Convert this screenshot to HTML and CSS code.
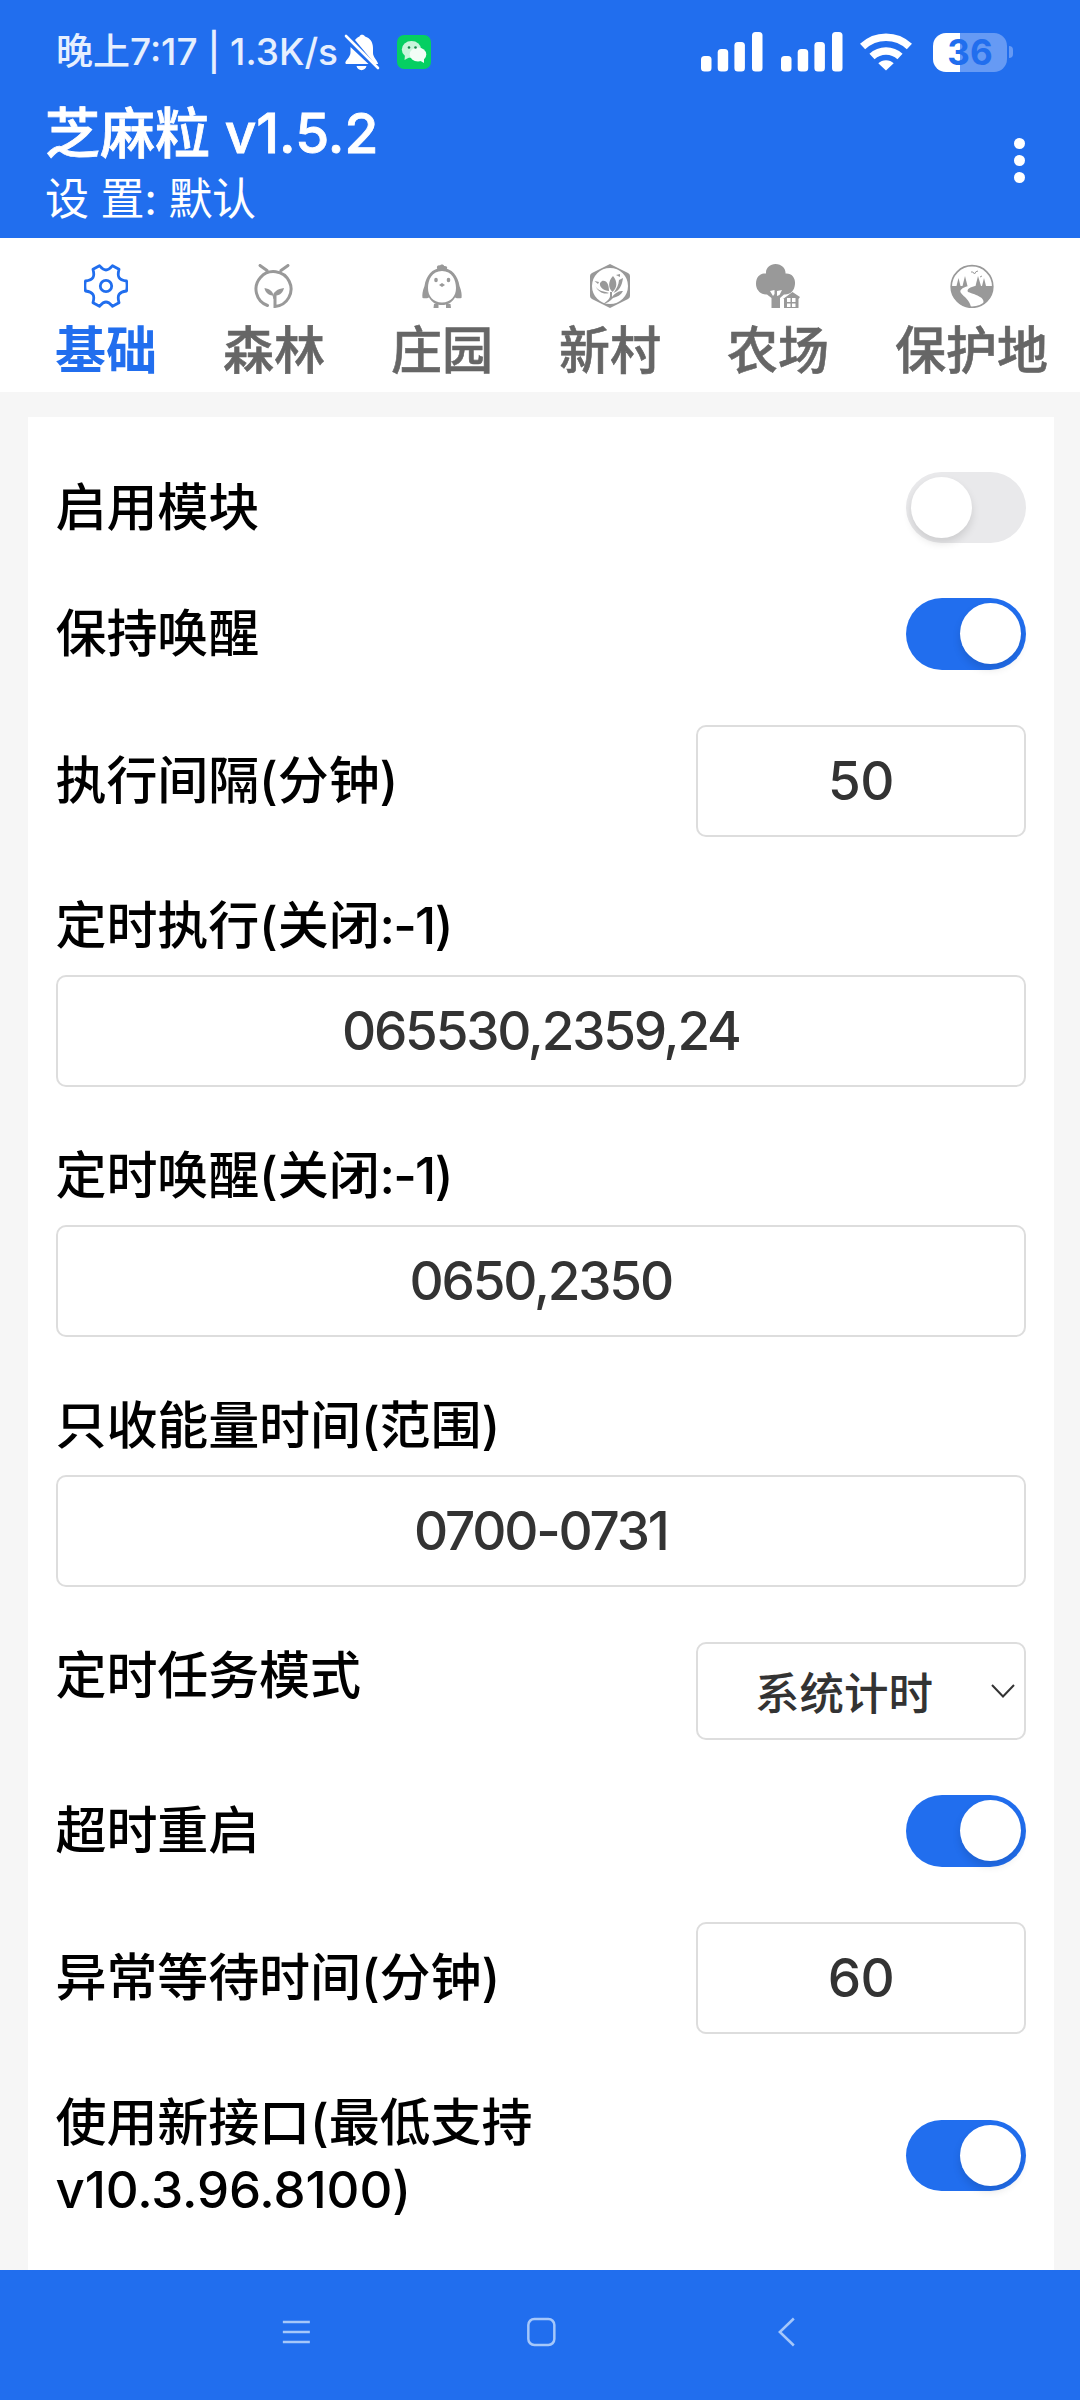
FILE: index.html
```html
<!DOCTYPE html>
<html lang="zh-CN">
<head>
    <meta charset="UTF-8">
    <meta name="viewport" content="width=device-width, initial-scale=1.0">
    <title>芝麻粒</title>
    <link rel="stylesheet" href="styles.css">
</head>
<body>
    <header class="header">
        <div class="status-bar">
            <div class="status-left">
                <span class="status-text">晚上7:17 | 1.3K/s</span>
                <svg class="bell" viewBox="0 0 36 38" width="36" height="38">
                    <path fill="#fff" d="M11 7C12.500 5 14 4 15.500 3.500C16 1 20 1 21 3.500C26 5 29 9 29 15V20C29 24 33 27 34 30.500V31H31ZM6.500 14L24.500 31H3C1 31 1 29.500 2 28C4 25 6.500 23 6.500 19ZM12.500 33H22.500C21.500 38.500 13.500 38.500 12.500 33Z"/>
                    <path stroke="#fff" stroke-width="2.600" stroke-linecap="round" d="M2 3L34 35"/>
                </svg>
                <svg class="wechat" viewBox="0 0 34 34" width="34" height="34">
                    <rect width="34" height="34" rx="7" fill="#05cf62"/>
                    <ellipse cx="14.500" cy="14.500" rx="9.700" ry="8.500" fill="#c9f5dc"/>
                    <path fill="#c9f5dc" d="M8 20L7.500 25L13 22Z"/>
                    <ellipse cx="21" cy="19.500" rx="8.300" ry="7" fill="#f2fdf6"/>
                    <path fill="#f2fdf6" d="M22 25L27 28L27 23Z"/>
                    <circle cx="12" cy="12.500" r="1.300" fill="#14894b"/>
                    <circle cx="18.500" cy="12.500" r="1.300" fill="#14894b"/>
                </svg>
            </div>
            <div class="status-right">
                <svg class="signal" viewBox="0 0 62 40" width="62" height="40" fill="#fff">
                    <rect x="0" y="24" width="10.500" height="15.500" rx="3.500"/>
                    <rect x="16.700" y="17" width="10.500" height="22.500" rx="3.500"/>
                    <rect x="33.400" y="10" width="10.500" height="29.500" rx="3.500"/>
                    <rect x="51" y="0" width="10.500" height="39.500" rx="3.500"/>
                </svg>
                <svg class="signal" viewBox="0 0 62 40" width="62" height="40" fill="#fff">
                    <rect x="0" y="24" width="10.500" height="15.500" rx="3.500"/>
                    <rect x="16.700" y="17" width="10.500" height="22.500" rx="3.500"/>
                    <rect x="33.400" y="10" width="10.500" height="29.500" rx="3.500"/>
                    <rect x="51" y="0" width="10.500" height="39.500" rx="3.500"/>
                </svg>
                <svg class="wifi" viewBox="0 0 52 40" width="52" height="40">
                    <path fill="none" stroke="#fff" stroke-width="7.500" d="M2.600 14.500A34 34 0 0 1 49.400 14.500M12 24.500A20.500 20.500 0 0 1 40 24.500"/>
                    <path fill="#fff" d="M26 38.500L18.300 31.300A11 11 0 0 1 33.700 31.300Z"/>
                </svg>
                <div class="battery"><span>36</span></div>
                <div class="battery-cap"></div>
            </div>
        </div>
        <div class="title-bar">
            <div>
                <h1 class="title">芝麻粒 v1.5.2</h1>
                <p class="subtitle">设 置: 默认</p>
            </div>
            <div class="more"><i></i><i></i><i></i></div>
        </div>
    </header>

    <nav class="tabs">
        <div class="tab active">
            <svg viewBox="0 0 44 44" width="44" height="44" fill="none" stroke="currentColor" stroke-width="2.800" stroke-linejoin="round">
                <path d="M15.500 1.700C17.500 4 19 6 22 6C25 6 26.500 4 28.500 1.700L35 5.300C34 9 33.500 11 35 13.500C36.500 16 39 16.500 42.500 17C43.200 20 43.200 24 42.500 27C39 27.500 36.500 28 35 30.500C33.500 33 34 35 35 38.700L28.500 42.300C26.500 40 25 38 22 38C19 38 17.500 40 15.500 42.300L9 38.700C10 35 10.500 33 9 30.500C7.500 28 5 27.500 1.500 27C0.800 24 0.800 20 1.500 17C5 16.500 7.500 16 9 13.500C10.500 11 10 9 9 5.300Z"/>
                <circle cx="22" cy="22" r="5.700"/>
            </svg>
            <span>基础</span>
        </div>
        <div class="tab">
            <svg viewBox="0 0 44 44" width="44" height="44" fill="none" stroke="#999" stroke-width="3" stroke-linecap="round">
                <path d="M8 1.500L15 6.500M36 1.500L29 6.500M15.500 41.500A17.500 17.500 0 1 1 23 42.500V30"/>
                <path fill="#999" stroke="none" d="M22 33C21 30 22 29 24 27C26 25 29 24.500 32 24C31 28 29 31 24 31.500L23 35H21.500L20.500 31.500C16 31 13 28 12.500 24C18 25 21 27 22 33Z"/>
            </svg>
            <span>森林</span>
        </div>
        <div class="tab">
            <svg viewBox="0 0 44 44" width="44" height="44" fill="#999">
                <path d="M17.500 5.500C15.500 1.500 19 .5 20 1.500C21 -.5 24.500 .5 24 2C27 1.500 28 3.500 26.500 5.500Z"/>
                <path fill-rule="evenodd" d="M22 4C32 4 38 12 39.500 22C41.500 27 42 31 41.500 34C39.500 34.500 37 34.500 35 33.500C32 38.500 28 41 22 41C16 41 12 38.500 9 33.500C7 34.500 4.500 34.500 2.500 34C2 31 2.500 27 4.500 22C6 12 12 4 22 4ZM22 7C12 7 8 16 8 24C8 32 13 38.500 22 38.500C31 38.500 36 32 36 24C36 16 32 7 22 7Z"/>
                <ellipse cx="16" cy="16" rx="1.800" ry="2.200"/>
                <ellipse cx="28.500" cy="16" rx="1.800" ry="2.200"/>
                <path d="M19 21L22 19L25 21L22 23ZM14 40H18.500V44H13.500ZM26 40H30.500L31 44H26Z"/>
            </svg>
            <span>庄园</span>
        </div>
        <div class="tab">
            <svg viewBox="0 0 44 44" width="44" height="44" fill="#999">
                <path fill-rule="evenodd" d="M22 0L40 9Q42 10 42 12V32Q42 34 40 35L22 44L4 35Q2 34 2 32V12Q2 10 4 9ZM22 4A18 18 0 1 0 22 40A18 18 0 1 0 22 4Z"/>
                <path d="M25 12C29.500 17 29.500 24 24.500 28C20 24 20 17 25 12ZM14 17C19 16 21 21 21 27C16 27 11 23 12 19ZM31 16L35 14C34 22 31 27 25.500 29C29 24 30.500 21 31 16ZM6.500 17L11 18L10 20ZM7.500 22C10 27 15 27 21 29C16 31 10 28 7.500 22ZM28 11L32 10V13ZM22 28H24V33C28 28 31 27 35 27C33 31 29 33 25 34C22 37 19 39.500 15 40C19 37 22 35 22 32Z"/>
            </svg>
            <span>新村</span>
        </div>
        <div class="tab">
            <svg viewBox="0 0 44 44" width="44" height="44" fill="#999">
                <path d="M19.500 0C26 0 30 5 29.500 9.500C36 9 39.500 14 39 20C38.500 27 34 31 28 30.500L24 34V44H15.500V34L11 30.500C5 31 0 26 0 20C0 13 4 9 10 9.500C9.500 4 14 0 19.500 0Z"/>
                <path fill="#fff" d="M14 27L18.500 26V30L17 32ZM21 27L26 26L23.500 31L21 32Z"/>
                <path d="M27 35L36.500 28L44 33L42.500 35V44H28V35Z"/>
                <path fill="#fff" d="M31 34H34.500V38H31ZM36 34H39.500V38H36ZM31 39.500H34.500V43H31ZM36 39.500H39.500V43H36Z"/>
            </svg>
            <span>农场</span>
        </div>
        <div class="tab">
            <svg viewBox="0 0 44 44" width="44" height="44" fill="#999">
                <circle cx="22" cy="22.500" r="20.800" fill="none" stroke="#999" stroke-width="1.700"/>
                <path d="M1 22H18C12 24 9 26 11 29C14 33 20 36 21 43.500C10 43 1 34 1 22ZM18 28C16 25 21 23 25 22H43C43 31 38 38 33 40C36 34 27 31 18 28Z"/>
                <path d="M8.500 14L10.500 22H6.500ZM15 12L17.500 22H12.500ZM28 12L31 22H25.500ZM34 14L36 22H32Z"/>
                <path fill="none" stroke="#999" d="M21 8Q23 7 24.500 10Q25.500 7 28 7M30 13L32 12"/>
            </svg>
            <span>保护地</span>
        </div>
    </nav>

    <main class="card">
        <div class="row">
            <span class="label">启用模块</span>
            <div class="switch"></div>
        </div>
        <div class="row">
            <span class="label">保持唤醒</span>
            <div class="switch on"></div>
        </div>
        <div class="row">
            <span class="label">执行间隔(分钟)</span>
            <input class="field short" type="text" value="50">
        </div>
        <div class="row column">
            <span class="label">定时执行(关闭<span class="tight">:-1)</span></span>
            <input class="field" type="text" value="065530,2359,24">
        </div>
        <div class="row column">
            <span class="label">定时唤醒(关闭<span class="tight">:-1)</span></span>
            <input class="field" type="text" value="0650,2350">
        </div>
        <div class="row column">
            <span class="label">只收能量时间(范围)</span>
            <input class="field" type="text" value="0700-0731">
        </div>
        <div class="row top">
            <span class="label">定时任务模式</span>
            <div class="select">
                <span>系统计时</span>
                <svg viewBox="0 0 24 16" width="24" height="16" fill="none" stroke="#333" stroke-width="2">
                    <path d="M1 2L12 13.500L23 2"/>
                </svg>
            </div>
        </div>
        <div class="row">
            <span class="label">超时重启</span>
            <div class="switch on"></div>
        </div>
        <div class="row">
            <span class="label">异常等待时间(分钟)</span>
            <input class="field short" type="text" value="60">
        </div>
        <div class="row">
            <span class="label">使用新接口(最低支持<br>v10.3.96.8100)</span>
            <div class="switch on"></div>
        </div>
    </main>

    <footer class="nav-bar">
        <svg viewBox="0 0 30 30" width="30" height="30">
            <path d="M1.500 5H28.500M1.500 15H28.500M1.500 25H28.500"/>
        </svg>
        <svg viewBox="0 0 30 30" width="30" height="30">
            <rect x="2" y="2" width="26" height="26" rx="6"/>
        </svg>
        <svg viewBox="0 0 30 30" width="30" height="30">
            <path d="M23.500 1.500L9.500 15L23.500 28.500"/>
        </svg>
    </footer>
</body>
</html>
```
FILE: styles.css
```css
* {
    margin: 0;
    padding: 0;
    box-sizing: border-box;
}

body {
    width: 1080px;
    height: 2400px;
    display: flex;
    flex-direction: column;
    overflow: hidden;
    background: #f6f6f6;
    font-family: Inter, "Noto Sans CJK SC", sans-serif;
    font-weight: 500;
}

svg {
    display: block;
    flex: none;
}

/* header */
.header {
    height: 238px;
    flex: none;
    background: #216eee;
    color: #fff;
}

.status-bar {
    height: 104px;
    padding: 0 67px 0 56px;
    display: flex;
    justify-content: space-between;
    align-items: center;
}

.status-left,
.status-right {
    display: flex;
    align-items: center;
}

.status-text {
    color: #e6effe;
    font-size: 37px;
    line-height: 50px;
    width: 288px;
    white-space: nowrap;
}

.wechat {
    margin-left: 17px;
}

.signal {
    margin-right: 17.500px;
}

.wifi {
    margin-right: 21px;
}

.battery {
    width: 74px;
    height: 39px;
    border-radius: 13px;
    background: linear-gradient(90deg, #fff 27px, #669af4 27px);
    color: #216eee;
    font-size: 35px;
    font-weight: 700;
    line-height: 39px;
    text-align: center;
}

.battery-cap {
    width: 4px;
    height: 12px;
    margin-left: 2px;
    border-radius: 0 4px 4px 0;
    background: #669af4;
}

.title-bar {
    height: 134px;
    padding: 0 55.500px 0 45px;
    display: flex;
    justify-content: space-between;
}

.title {
    margin-top: -8px;
    font-size: 55px;
    font-weight: 500;
    line-height: 74px;
    -webkit-text-stroke: 0.8px #fff;
}

.subtitle {
    font-size: 44px;
    font-weight: 400;
    line-height: 58px;
    letter-spacing: -0.400px;
}

.more {
    display: flex;
    flex-direction: column;
    gap: 6px;
    padding-top: 34px;
}

.more i {
    width: 11px;
    height: 11px;
    border-radius: 50%;
    background: #fff;
}

/* tabs */
.tabs {
    height: 154px;
    flex: none;
    padding: 25.500px 0 0 55px;
    display: flex;
    gap: 66px;
    background: #fff;
}

.tab {
    display: flex;
    flex-direction: column;
    align-items: center;
    color: #666;
    font-size: 51px;
    line-height: 66px;
    white-space: nowrap;
}

.tab span {
    margin-top: 10px;
    -webkit-text-stroke: 0.600px currentColor;
}

.tab.active {
    color: #216eee;
    font-weight: 700;
}

.tab.active span {
    -webkit-text-stroke: 0;
}

/* settings */
.card {
    flex: 1;
    margin: 25px 26px 0 28px;
    padding: 54.500px 28px 0 27.500px;
    display: flex;
    flex-direction: column;
    gap: 55px;
    background: #fff;
}

.row {
    display: flex;
    justify-content: space-between;
    align-items: center;
}

.row.column {
    flex-direction: column;
    align-items: stretch;
    gap: 16.500px;
}

.row.top {
    align-items: flex-start;
}

.label {
    color: #000;
    font-size: 51px;
    line-height: 67px;
    letter-spacing: -0.100px;
}

.tight {
    letter-spacing: -1.800px;
}

.switch {
    width: 120px;
    height: 71.500px;
    padding: 5px;
    display: flex;
    border-radius: 36px;
    background: #e9e9eb;
}

.switch::before {
    content: "";
    width: 61px;
    height: 61px;
    border-radius: 50%;
    background: #fff;
    box-shadow: 0 5px 8px rgba(0, 0, 0, 0.12);
}

.switch.on {
    justify-content: flex-end;
    background: #216eee;
}

.field {
    width: 100%;
    height: 111.500px;
    border: 2px solid #ddd;
    border-radius: 10px;
    background: #fff;
    color: #333;
    font-family: inherit;
    font-size: 53px;
    font-weight: 500;
    letter-spacing: -2.200px;
    text-align: center;
}

.field.short {
    width: 330px;
    height: 112px;
    letter-spacing: -0.500px;
}

.select {
    width: 330px;
    height: 98.500px;
    padding: 0 9px 0 57px;
    display: flex;
    justify-content: space-between;
    align-items: center;
    border: 2px solid #ddd;
    border-radius: 10px;
    color: #333;
    font-size: 44.500px;
}

/* system navigation */
.nav-bar {
    height: 130px;
    flex: none;
    padding: 0 172px 0 174px;
    display: flex;
    align-items: center;
    background: #216eee;
}

.nav-bar svg {
    flex: 1;
    height: 30px;
    margin-bottom: 6px;
    fill: none;
    stroke: #a5c7fa;
    stroke-width: 2.500;
}
```
